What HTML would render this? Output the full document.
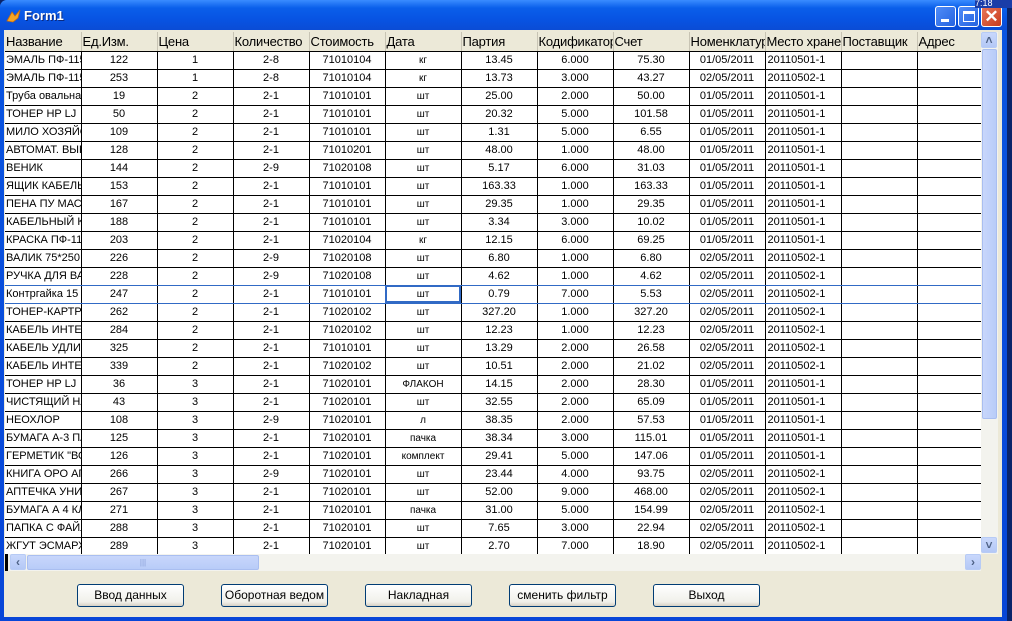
<!DOCTYPE html>
<html><head><meta charset="utf-8">
<style>
*{margin:0;padding:0;box-sizing:border-box}
body{width:1012px;height:621px;overflow:hidden;background:#0A246A;font-family:"Liberation Sans",sans-serif;font-size:11px;position:relative}
.win{position:absolute;left:0;top:0;width:1007px;height:621px;background:linear-gradient(#0058EE,#0A55E0 30px,#0846D8);border-radius:7px 7px 0 0}
.title{position:absolute;left:0;top:0;width:1007px;height:30px;background:linear-gradient(#3A8CFF,#0A5FEA 8px,#0853E2 20px,#0A4CD5);border-radius:7px 7px 0 0}
.title span{position:absolute;left:24px;top:8px;color:#fff;font-weight:bold;font-size:13px;text-shadow:1px 1px #0a2a80}
.client{position:absolute;left:4px;top:30px;width:998px;height:587px;background:#ECE9D8}
.tb{position:absolute;top:6px;width:21px;height:21px;border:1px solid #fff;border-radius:3px;background:linear-gradient(135deg,#4F8CF8,#2563E0)}
.grid{position:absolute;left:5px;top:32px;width:976px;height:522px;overflow:hidden;background:#fff}
table{border-collapse:collapse;table-layout:fixed;width:988px}
td,th{width:76px;height:18px;border-right:1px solid #000;border-bottom:1px solid #000;white-space:nowrap;overflow:hidden;font-weight:normal;text-align:center;padding:0 2px;line-height:17px}
th{background:#ECE9D8;text-align:left;font-size:13px;letter-spacing:-0.2px;border-right:1px solid #c8c4b4;border-bottom:1px solid #000;height:19px;padding:0 1px}
td:first-child{text-align:left;padding-left:1px}
td.u{font-size:10px}
td.l{text-align:left}
tr.sel td{border-bottom:1px solid #316AC5}
tr.pre td{border-bottom:1px solid #316AC5}
td.cur{outline:2px solid #316AC5;outline-offset:-2px}
.vs{position:absolute;left:981px;top:32px;width:17px;height:522px;background:#F3F3EE}
.hs{position:absolute;left:5px;top:554px;width:976px;height:17px;background:#F3F3EE}
.btnar{position:absolute;width:16px;height:16px;background:linear-gradient(#C9D8FC,#B4C8F6);border:1px solid #B7CBF5;border-radius:2px;color:#4D6185;font-size:12px;line-height:14px;text-align:center;font-weight:bold}
.btn{position:absolute;top:584px;width:107px;height:23px;border:1px solid #003C74;border-radius:3px;background:linear-gradient(#fff,#F0F0EA 80%,#D6D0C5);text-align:center;line-height:21px;font-size:12px}
</style></head><body>
<div class="win"></div>
<div class="title"><span>Form1</span>
<svg style="position:absolute;left:6px;top:9px" width="16" height="14"><path d="M1 12 L6 3 L9 7 L14 1 L12 9 L7 13 Z" fill="#F5A623" stroke="#C86A10" stroke-width="0.8"/></svg>
<div class="tb" style="left:935px"><div style="position:absolute;left:5px;top:12px;width:8px;height:3px;background:#fff"></div></div>
<div class="tb" style="left:958px"><div style="position:absolute;left:4px;top:4px;width:12px;height:11px;border:1px solid #fff;border-top:3px solid #fff"></div></div>
<div class="tb" style="left:981px;background:linear-gradient(135deg,#E8775A,#C93B1C)"><div style="position:absolute;left:0;top:0;width:19px;height:19px;color:#fff;font-size:17px;font-weight:bold;text-align:center;line-height:19px">✕</div></div>
<div style="position:absolute;left:975px;top:0;width:37px;height:8px;background:#1A3DA8;color:#fff;font-size:9px;line-height:6px;overflow:hidden">7:18</div>
</div>
<div class="client"></div>
<div class="grid"><table>
<tr><th>Название</th><th>Ед.Изм.</th><th>Цена</th><th>Количество</th><th>Стоимость</th><th>Дата</th><th>Партия</th><th>Кодификатор</th><th>Счет</th><th>Номенклатура</th><th>Место хранения</th><th>Поставщик</th><th>Адрес</th></tr>
<tr><td>ЭМАЛЬ ПФ-115</td><td>122</td><td>1</td><td>2-8</td><td>71010104</td><td class="u">кг</td><td>13.45</td><td>6.000</td><td>75.30</td><td>01/05/2011</td><td class="l">20110501-1</td><td></td><td></td></tr>
<tr><td>ЭМАЛЬ ПФ-115</td><td>253</td><td>1</td><td>2-8</td><td>71010104</td><td class="u">кг</td><td>13.73</td><td>3.000</td><td>43.27</td><td>02/05/2011</td><td class="l">20110502-1</td><td></td><td></td></tr>
<tr><td>Труба овальная</td><td>19</td><td>2</td><td>2-1</td><td>71010101</td><td class="u">шт</td><td>25.00</td><td>2.000</td><td>50.00</td><td>01/05/2011</td><td class="l">20110501-1</td><td></td><td></td></tr>
<tr><td>ТОНЕР HP LJ</td><td>50</td><td>2</td><td>2-1</td><td>71010101</td><td class="u">шт</td><td>20.32</td><td>5.000</td><td>101.58</td><td>01/05/2011</td><td class="l">20110501-1</td><td></td><td></td></tr>
<tr><td>МИЛО ХОЗЯЙСТВ</td><td>109</td><td>2</td><td>2-1</td><td>71010101</td><td class="u">шт</td><td>1.31</td><td>5.000</td><td>6.55</td><td>01/05/2011</td><td class="l">20110501-1</td><td></td><td></td></tr>
<tr><td>АВТОМАТ. ВЫКЛ</td><td>128</td><td>2</td><td>2-1</td><td>71010201</td><td class="u">шт</td><td>48.00</td><td>1.000</td><td>48.00</td><td>01/05/2011</td><td class="l">20110501-1</td><td></td><td></td></tr>
<tr><td>ВЕНИК</td><td>144</td><td>2</td><td>2-9</td><td>71020108</td><td class="u">шт</td><td>5.17</td><td>6.000</td><td>31.03</td><td>01/05/2011</td><td class="l">20110501-1</td><td></td><td></td></tr>
<tr><td>ЯЩИК КАБЕЛЬНЫЙ</td><td>153</td><td>2</td><td>2-1</td><td>71010101</td><td class="u">шт</td><td>163.33</td><td>1.000</td><td>163.33</td><td>01/05/2011</td><td class="l">20110501-1</td><td></td><td></td></tr>
<tr><td>ПЕНА ПУ МАСТЕР</td><td>167</td><td>2</td><td>2-1</td><td>71010101</td><td class="u">шт</td><td>29.35</td><td>1.000</td><td>29.35</td><td>01/05/2011</td><td class="l">20110501-1</td><td></td><td></td></tr>
<tr><td>КАБЕЛЬНЫЙ КАН</td><td>188</td><td>2</td><td>2-1</td><td>71010101</td><td class="u">шт</td><td>3.34</td><td>3.000</td><td>10.02</td><td>01/05/2011</td><td class="l">20110501-1</td><td></td><td></td></tr>
<tr><td>КРАСКА ПФ-115</td><td>203</td><td>2</td><td>2-1</td><td>71020104</td><td class="u">кг</td><td>12.15</td><td>6.000</td><td>69.25</td><td>01/05/2011</td><td class="l">20110501-1</td><td></td><td></td></tr>
<tr><td>ВАЛИК 75*250</td><td>226</td><td>2</td><td>2-9</td><td>71020108</td><td class="u">шт</td><td>6.80</td><td>1.000</td><td>6.80</td><td>02/05/2011</td><td class="l">20110502-1</td><td></td><td></td></tr>
<tr class="pre"><td>РУЧКА ДЛЯ ВАЛ</td><td>228</td><td>2</td><td>2-9</td><td>71020108</td><td class="u">шт</td><td>4.62</td><td>1.000</td><td>4.62</td><td>02/05/2011</td><td class="l">20110502-1</td><td></td><td></td></tr>
<tr class="sel"><td>Контргайка 15</td><td>247</td><td>2</td><td>2-1</td><td>71010101</td><td class="u cur">шт</td><td>0.79</td><td>7.000</td><td>5.53</td><td>02/05/2011</td><td class="l">20110502-1</td><td></td><td></td></tr>
<tr><td>ТОНЕР-КАРТРИДЖ</td><td>262</td><td>2</td><td>2-1</td><td>71020102</td><td class="u">шт</td><td>327.20</td><td>1.000</td><td>327.20</td><td>02/05/2011</td><td class="l">20110502-1</td><td></td><td></td></tr>
<tr><td>КАБЕЛЬ ИНТЕРФ</td><td>284</td><td>2</td><td>2-1</td><td>71020102</td><td class="u">шт</td><td>12.23</td><td>1.000</td><td>12.23</td><td>02/05/2011</td><td class="l">20110502-1</td><td></td><td></td></tr>
<tr><td>КАБЕЛЬ УДЛИН</td><td>325</td><td>2</td><td>2-1</td><td>71010101</td><td class="u">шт</td><td>13.29</td><td>2.000</td><td>26.58</td><td>02/05/2011</td><td class="l">20110502-1</td><td></td><td></td></tr>
<tr><td>КАБЕЛЬ ИНТЕРФ</td><td>339</td><td>2</td><td>2-1</td><td>71020102</td><td class="u">шт</td><td>10.51</td><td>2.000</td><td>21.02</td><td>02/05/2011</td><td class="l">20110502-1</td><td></td><td></td></tr>
<tr><td>ТОНЕР HP LJ</td><td>36</td><td>3</td><td>2-1</td><td>71020101</td><td class="u">ФЛАКОН</td><td>14.15</td><td>2.000</td><td>28.30</td><td>01/05/2011</td><td class="l">20110501-1</td><td></td><td></td></tr>
<tr><td>ЧИСТЯЩИЙ НАБ</td><td>43</td><td>3</td><td>2-1</td><td>71020101</td><td class="u">шт</td><td>32.55</td><td>2.000</td><td>65.09</td><td>01/05/2011</td><td class="l">20110501-1</td><td></td><td></td></tr>
<tr><td>НЕОХЛОР</td><td>108</td><td>3</td><td>2-9</td><td>71020101</td><td class="u">л</td><td>38.35</td><td>2.000</td><td>57.53</td><td>01/05/2011</td><td class="l">20110501-1</td><td></td><td></td></tr>
<tr><td>БУМАГА А-3 ПАП</td><td>125</td><td>3</td><td>2-1</td><td>71020101</td><td class="u">пачка</td><td>38.34</td><td>3.000</td><td>115.01</td><td>01/05/2011</td><td class="l">20110501-1</td><td></td><td></td></tr>
<tr><td>ГЕРМЕТИК "ВОЛ</td><td>126</td><td>3</td><td>2-1</td><td>71020101</td><td class="u">комплект</td><td>29.41</td><td>5.000</td><td>147.06</td><td>01/05/2011</td><td class="l">20110501-1</td><td></td><td></td></tr>
<tr><td>КНИГА ОРО АП</td><td>266</td><td>3</td><td>2-9</td><td>71020101</td><td class="u">шт</td><td>23.44</td><td>4.000</td><td>93.75</td><td>02/05/2011</td><td class="l">20110502-1</td><td></td><td></td></tr>
<tr><td>АПТЕЧКА УНИВ</td><td>267</td><td>3</td><td>2-1</td><td>71020101</td><td class="u">шт</td><td>52.00</td><td>9.000</td><td>468.00</td><td>02/05/2011</td><td class="l">20110502-1</td><td></td><td></td></tr>
<tr><td>БУМАГА А 4 КЛ</td><td>271</td><td>3</td><td>2-1</td><td>71020101</td><td class="u">пачка</td><td>31.00</td><td>5.000</td><td>154.99</td><td>02/05/2011</td><td class="l">20110502-1</td><td></td><td></td></tr>
<tr><td>ПАПКА С ФАЙЛ</td><td>288</td><td>3</td><td>2-1</td><td>71020101</td><td class="u">шт</td><td>7.65</td><td>3.000</td><td>22.94</td><td>02/05/2011</td><td class="l">20110502-1</td><td></td><td></td></tr>
<tr><td>ЖГУТ ЭСМАРХ</td><td>289</td><td>3</td><td>2-1</td><td>71020101</td><td class="u">шт</td><td>2.70</td><td>7.000</td><td>18.90</td><td>02/05/2011</td><td class="l">20110502-1</td><td></td><td></td></tr>
</table></div>
<div class="vs">
<div class="btnar" style="left:0;top:0">˄</div>
<div style="position:absolute;left:1px;top:17px;width:15px;height:370px;background:linear-gradient(90deg,#C8D6FB,#B8CCF8);border:1px solid #A9BEF0;border-radius:2px"></div>
<div class="btnar" style="left:0;top:505px">˅</div>
</div>
<div class="hs">
<div style="position:absolute;left:0;top:0;width:3px;height:17px;background:#000"></div>
<div class="btnar" style="left:5px;top:0">‹</div>
<div style="position:absolute;left:22px;top:1px;width:232px;height:15px;background:linear-gradient(#C8D6FB,#B8CCF8);border:1px solid #A9BEF0;border-radius:2px;color:#8AA0D8;text-align:center;font-size:8px;line-height:13px">|||</div>
<div class="btnar" style="left:960px;top:0">›</div>
</div>
<div class="btn" style="left:77px">Ввод данных</div>
<div class="btn" style="left:221px">Оборотная ведом</div>
<div class="btn" style="left:365px">Накладная</div>
<div class="btn" style="left:509px">сменить фильтр</div>
<div class="btn" style="left:653px">Выход</div>
</body></html>
